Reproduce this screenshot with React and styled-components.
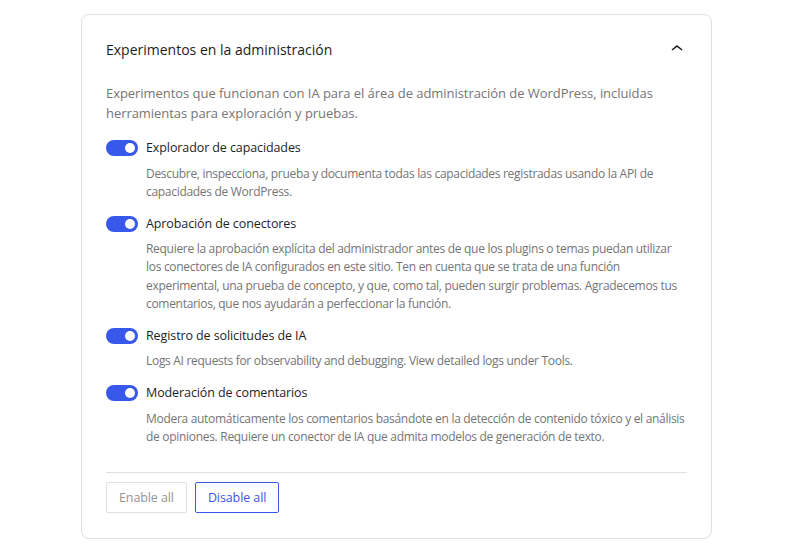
import styled, { createGlobalStyle } from "styled-components"

const Global = createGlobalStyle`
body {
  margin: 0;
  background: #fff;
  font-family: "Segoe UI", "Open Sans", "Noto Sans", sans-serif;
  color: #1e1e1e;
}
`

const Page = styled.div`
padding: 14px 100px 10px 81px;
`

const Card = styled.div`
width: 631px;
box-sizing: border-box;
border: 1px solid #e0e0e0;
border-radius: 8px;
background: #fff;
padding: 0 24px 24.5px;
`

const Header = styled.div`
height: 68px;
display: flex;
align-items: center;
justify-content: space-between;
`

const Title = styled.h2`
margin: 0;
font-size: 14px;
font-weight: 400;
color: #1e1e1e;
`

const Chevron = styled.button`
border: 0;
background: none;
padding: 0;
width: 24px;
height: 24px;
display: flex;
align-items: center;
justify-content: center;
margin-right: -2px;
`

const Intro = styled.p`
margin: 0 0 15px;
font-size: 13px;
letter-spacing: -0.05px;
line-height: 20px;
color: #757575;
`

const List = styled.div`
display: flex;
flex-direction: column;
gap: 12.6px;
`

const Item = styled.div`
display: grid;
grid-template-columns: 32px 1fr;
column-gap: 8px;
`

const Toggle = styled.span`
width: 32px;
height: 16px;
border-radius: 8px;
background: #3858e9;
position: relative;
margin-top: 2px;
&::after {
  content: "";
  position: absolute;
  top: 3px;
  right: 3px;
  width: 10px;
  height: 10px;
  border-radius: 50%;
  background: #fff;
}
`

const Label = styled.div`
font-size: 12.5px;
letter-spacing: -0.1px;
line-height: 20px;
color: #1e1e1e;
`

const Desc = styled.div`
grid-column: 2;
margin-top: 6.5px;
font-size: 12px;
letter-spacing: -0.3px;
line-height: 18.3px;
color: #757575;
`

const Footer = styled.div`
margin-top: 26px;
border-top: 1px solid #e0e0e0;
padding-top: 9px;
display: flex;
gap: 8px;
`

const Button = styled.button`
height: 31px;
padding: 0 12px;
border-radius: 2px;
background: #fff;
font-family: inherit;
font-size: 12.5px;
letter-spacing: -0.1px;
border: 1px solid ${p => (p.disabled ? "#e0e0e0" : "#3858e9")};
color: ${p => (p.disabled ? "#949494" : "#3858e9")};
`

const items = [
  {
    label: "Explorador de capacidades",
    desc: "Descubre, inspecciona, prueba y documenta todas las capacidades registradas usando la API de capacidades de WordPress.",
  },
  {
    label: "Aprobación de conectores",
    desc: "Requiere la aprobación explícita del administrador antes de que los plugins o temas puedan utilizar los conectores de IA configurados en este sitio. Ten en cuenta que se trata de una función experimental, una prueba de concepto, y que, como tal, pueden surgir problemas. Agradecemos tus comentarios, que nos ayudarán a perfeccionar la función.",
  },
  {
    label: "Registro de solicitudes de IA",
    desc: "Logs AI requests for observability and debugging. View detailed logs under Tools.",
  },
  {
    label: "Moderación de comentarios",
    desc: "Modera automáticamente los comentarios basándote en la detección de contenido tóxico y el análisis de opiniones. Requiere un conector de IA que admita modelos de generación de texto.",
  },
]

const App = () => {
  return (
    <Page>
      <Global />
      <Card>
        <Header>
          <Title>Experimentos en la administración</Title>
          <Chevron aria-label="Contraer">
            <svg width="24" height="24" viewBox="0 0 24 24">
              <path d="M6.5 12.4L12 8l5.5 4.4-.9 1.2L12 10l-4.6 3.6-.9-1.2z" fill="#1e1e1e" />
            </svg>
          </Chevron>
        </Header>
        <Intro>
          Experimentos que funcionan con IA para el área de administración de WordPress, incluidas
          herramientas para exploración y pruebas.
        </Intro>
        <List>
          {items.map(it => (
            <Item key={it.label}>
              <Toggle />
              <Label>{it.label}</Label>
              <Desc>{it.desc}</Desc>
            </Item>
          ))}
        </List>
        <Footer>
          <Button disabled>Enable all</Button>
          <Button>Disable all</Button>
        </Footer>
      </Card>
    </Page>
  )
}

export default App
